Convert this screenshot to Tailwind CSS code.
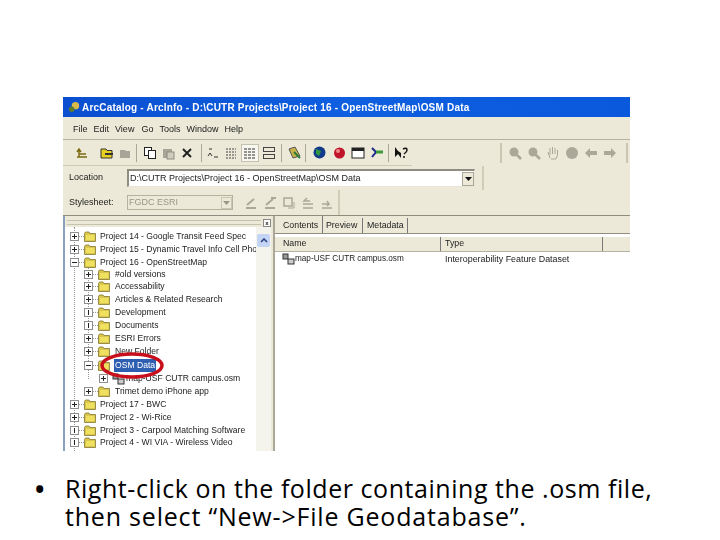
<!DOCTYPE html>
<html lang="en">
<head>
<meta charset="UTF-8">
<title>Slide</title>
<script src="https://cdn.jsdelivr.net/npm/@tailwindcss/browser@4"></script>
</head>
<body class="w-[720px] h-[540px] bg-white overflow-hidden font-['Open_Sans',sans-serif]">
<svg class="hidden">
  <symbol id="folder" viewBox="0 0 12 11">
    <path d="M0.5 2.5 L1.5 1 H5 L6 2.5 H11.5 V10.5 H0.5 Z" fill="#d8c64e" stroke="#85772f" stroke-width="0.8"/>
    <path d="M2 4 H10.5 V9 H2 Z" fill="#efe05f"/>
  </symbol>
  <symbol id="plus" viewBox="0 0 9 9">
    <rect x="0.5" y="0.5" width="8" height="8" fill="#fff" stroke="#8f8f8f"/>
    <path d="M2 4.5 H7 M4.5 2 V7" stroke="#222"/>
  </symbol>
  <symbol id="minus" viewBox="0 0 9 9">
    <rect x="0.5" y="0.5" width="8" height="8" fill="#fff" stroke="#8f8f8f"/>
    <path d="M2 4.5 H7" stroke="#222"/>
  </symbol>
  <symbol id="leaf" viewBox="0 0 9 9">
    <rect x="0.5" y="0.5" width="8" height="8" fill="#fff" stroke="#8f8f8f"/>
    <path d="M4.5 2 V7" stroke="#222"/>
  </symbol>
</svg>

<div class="h-[97px]"></div>
<div class="ml-[63px] w-[567px] h-[354px] bg-[#ece9d8] flex flex-col overflow-hidden text-[9px] text-[#222] font-['Liberation_Sans',sans-serif] relative blur-[0.45px]">
  <!-- title bar -->
  <div class="h-[20px] shrink-0 bg-gradient-to-r from-[#0a4fd0] via-[#0f5fe0] to-[#0a58dc] flex items-center pl-[5px] gap-[1px] text-white font-bold text-[10px] tracking-[0.2px]">
    <svg width="13" height="13" viewBox="0 0 14 14"><circle cx="8" cy="5" r="4" fill="#d8b94a"/><circle cx="4" cy="9" r="3" fill="#5a7a30"/></svg>
    <span>ArcCatalog - ArcInfo - D:\CUTR Projects\Project 16 - OpenStreetMap\OSM Data</span>
  </div>
  <!-- menu -->
  <div class="h-[23px] shrink-0 flex items-center pl-[10px] pt-[3px] gap-[6px] border-b border-[#b5b2a0] text-[9px]">
    <span>File</span><span>Edit</span><span>View</span><span class="ml-[1px]">Go</span><span>Tools</span><span>Window</span><span>Help</span>
  </div>
  <!-- main toolbar row -->
  <div class="h-[26px] shrink-0 flex items-center">
    <div class="w-[349px] h-full flex items-center pl-[11px] border-b border-[#cfccb8]">
      <svg class="ml-[1px]" width="14" height="14" viewBox="0 0 14 14"><path d="M2 11 H12 M4 11 V4 M2 6 L4 3 L6 6 M4 8 H11" stroke="#7a6a10" stroke-width="1.4" fill="none"/></svg>
      <svg class="ml-[11px]" width="14" height="14" viewBox="0 0 14 14"><path d="M1 3 H6 L7 4.500 H12 V12 H1 Z" fill="#e8d020" stroke="#333"/><path d="M5 8 H13" stroke="#333" stroke-width="2"/></svg>
      <svg class="ml-[4px]" width="14" height="14" viewBox="0 0 14 14"><path d="M2 4 H7 L8 5 H12 V12 H2 Z" fill="#a8a498"/></svg>
      <div class="ml-[4px] w-px h-[18px] bg-[#aca899]"></div>
      <svg class="ml-[6px]" width="14" height="14" viewBox="0 0 14 14"><rect x="1.500" y="1.500" width="7" height="8" fill="#fff" stroke="#222"/><rect x="5.500" y="4.500" width="7" height="8" fill="#fff" stroke="#222"/></svg>
      <svg class="ml-[4px]" width="14" height="14" viewBox="0 0 14 14"><rect x="2" y="3" width="9" height="9" fill="#a8a498"/><rect x="6" y="6" width="7" height="7" fill="#cfcbbd" stroke="#8f8c80"/></svg>
      <svg class="ml-[6px]" width="12" height="12" viewBox="0 0 12 12"><path d="M2 2 L10 10 M10 2 L2 10" stroke="#222" stroke-width="2"/></svg>
      <div class="ml-[8px] w-px h-[18px] bg-[#aca899]"></div>
      <svg class="ml-[4px]" width="14" height="14" viewBox="0 0 14 14"><path d="M3 3 H6 M2 10 L4 7 L6 10 M8 11 H12" stroke="#333" fill="none"/></svg>
      <svg class="ml-[4px]" width="14" height="14" viewBox="0 0 14 14"><path d="M2 3 H12 M2 6 H12 M2 9 H12 M2 12 H12" stroke="#444" stroke-dasharray="2 1"/></svg>
      <div class="ml-[3px] w-[18px] h-[18px] bg-[#f7f6ef] border border-[#c5c2b0] flex items-center justify-center">
        <svg width="14" height="12" viewBox="0 0 14 12"><path d="M1 2 H13 M1 5 H13 M1 8 H13 M1 11 H13" stroke="#333" stroke-dasharray="3 1"/></svg>
      </div>
      <svg class="ml-[3px]" width="14" height="14" viewBox="0 0 14 14"><rect x="1.500" y="1.500" width="11" height="4" fill="none" stroke="#444"/><rect x="1.500" y="8.500" width="11" height="4" fill="none" stroke="#444"/></svg>
      <div class="ml-[5px] w-px h-[18px] bg-[#aca899]"></div>
      <svg class="ml-[5px]" width="15" height="15" viewBox="0 0 15 15"><path d="M2 4 L8 2 L13 11 L6 13 Z" fill="#c9b24a" stroke="#555"/><path d="M7 7 L13 13" stroke="#2a7a3a" stroke-width="2"/></svg>
      <div class="ml-[3px] w-px h-[18px] bg-[#aca899]"></div>
      <svg class="ml-[6px]" width="15" height="15" viewBox="0 0 15 15"><circle cx="7.500" cy="7.500" r="6" fill="#123a8a"/><path d="M4 4 L9 6 L7 11 L4 9 Z" fill="#2f9a40"/></svg>
      <svg class="ml-[5px]" width="15" height="15" viewBox="0 0 15 15"><circle cx="7.500" cy="8" r="5.500" fill="#c0142a"/><circle cx="6" cy="6" r="2" fill="#ee8a8a"/></svg>
      <svg class="ml-[4px]" width="14" height="12" viewBox="0 0 14 12"><rect x="1" y="1" width="12" height="10" fill="#fff" stroke="#222"/><rect x="1" y="1" width="12" height="3" fill="#222"/></svg>
      <svg class="ml-[4px]" width="15" height="13" viewBox="0 0 15 13"><path d="M3 2 L7 6 L3 11" stroke="#1a2a8a" stroke-width="2" fill="none"/><path d="M7 6 H14" stroke="#3a9a3a" stroke-width="3"/></svg>
      <div class="ml-[4px] w-px h-[18px] bg-[#aca899]"></div>
      <svg class="ml-[4px]" width="16" height="14" viewBox="0 0 16 14"><path d="M2 1 V11 L5 8 L8 12 V7 L5 5 Z" fill="#111"/><path d="M10 3 Q14 1 14 4 Q14 6 11 8 M11 10 V12" stroke="#111" stroke-width="1.500" fill="none"/></svg>
    </div>
    <div class="ml-[88px] w-[128px] h-[20px] border-x-2 border-[#c9c6b4] flex items-center gap-[5px] pl-[6px]">
      <svg width="14" height="14" viewBox="0 0 14 14"><circle cx="6" cy="6" r="4.500" fill="#aca899"/><path d="M9 9 L13 13" stroke="#aca899" stroke-width="2.500"/></svg>
      <svg width="14" height="14" viewBox="0 0 14 14"><circle cx="6" cy="6" r="4.500" fill="#aca899"/><path d="M9 9 L13 13" stroke="#aca899" stroke-width="2.500"/></svg>
      <svg width="14" height="14" viewBox="0 0 14 14"><path d="M4 12 L2 6 M4 9 V2 M6.500 8 V1 M9 8 V2 M11.500 9 V4 V9 L10 13 H5" stroke="#aca899" fill="none"/></svg>
      <svg width="14" height="14" viewBox="0 0 14 14"><circle cx="7" cy="7" r="6" fill="#aca899"/></svg>
      <svg width="14" height="14" viewBox="0 0 14 14"><path d="M1 7 L6 2 V5 H13 V9 H6 V12 Z" fill="#aca899"/></svg>
      <svg width="14" height="14" viewBox="0 0 14 14"><path d="M13 7 L8 2 V5 H1 V9 H8 V12 Z" fill="#aca899"/></svg>
    </div>
  </div>
  <!-- location -->
  <div class="h-[24px] shrink-0 w-[421px] flex items-center pl-[6px] border-r-2 border-[#cfccb8]">
    <span class="w-[58px] text-[9px]">Location</span>
    <div class="w-[348px] h-[18px] bg-white border border-t-2 border-l-2 border-[#8f8c80] border-r-[#e8e5d8] border-b-[#e8e5d8] flex items-center justify-between pl-[1px]">
      <span class="whitespace-nowrap">D:\CUTR Projects\Project 16 - OpenStreetMap\OSM Data</span>
      <div class="w-[12px] h-[14px] bg-[#ece9d8] border border-[#aca899] flex items-center justify-center">
        <svg width="7" height="4" viewBox="0 0 7 4"><path d="M0 0 H7 L3.500 4 Z" fill="#111"/></svg>
      </div>
    </div>
  </div>
  <!-- stylesheet -->
  <div class="h-[25px] shrink-0 w-[277px] flex items-center pl-[6px] border-r-2 border-[#cfccb8]">
    <span class="w-[58px] text-[9px]">Stylesheet:</span>
    <div class="w-[106px] h-[15px] bg-[#ece9d8] border border-[#b5b2a0] flex items-center justify-between pl-[1px] text-[#9a9788]">
      <span>FGDC ESRI</span>
      <div class="w-[11px] h-[12px] border border-[#c9c6b4] flex items-center justify-center">
        <svg width="7" height="4" viewBox="0 0 7 4"><path d="M0 0 H7 L3.500 4 Z" fill="#9a9788"/></svg>
      </div>
    </div>
    <div class="flex items-center gap-[5px] ml-[11px]">
      <svg width="14" height="14" viewBox="0 0 14 14"><path d="M2 12 H12 M3 9 L10 3" stroke="#aca899" stroke-width="2" fill="none"/></svg>
      <svg width="14" height="14" viewBox="0 0 14 14"><path d="M2 12 H12 M3 9 L10 3 M8 2 H13" stroke="#aca899" stroke-width="2" fill="none"/></svg>
      <svg width="14" height="14" viewBox="0 0 14 14"><rect x="2" y="2" width="8" height="8" fill="none" stroke="#aca899" stroke-width="1.500"/><path d="M6 12 H12 V6" stroke="#aca899" fill="none"/></svg>
      <svg width="14" height="14" viewBox="0 0 14 14"><path d="M2 12 H12 M2 8 H12 M6 2 L3 5 H9" stroke="#aca899" stroke-width="1.500" fill="none"/></svg>
      <svg width="14" height="14" viewBox="0 0 14 14"><path d="M2 12 H12 M2 8 H9 L7 5 M9 8 L7 10" stroke="#aca899" stroke-width="1.500" fill="none"/></svg>
    </div>
  </div>
  <div class="h-px shrink-0 bg-[#8f8c80]"></div>
  <!-- panes -->
  <div class="flex-1 flex min-h-0">
    <div class="w-[2px] shrink-0 bg-[#8d9fc0]"></div>
    <!-- tree pane -->
    <div class="w-[206px] shrink-0 flex flex-col">
      <div class="h-[9px] shrink-0 flex items-center gap-[2px] mt-[2px] pl-[2px]">
        <div class="flex-1 h-[5px] border-y border-[#c5c2b0]"></div>
        <div class="w-[8px] h-[8px] bg-white border border-[#888] flex items-center justify-center text-[6px] leading-none font-bold">x</div>
      </div>
      <div class="flex-1 min-h-0 bg-white flex overflow-hidden relative">
        <!-- dotted guide lines of the tree -->
        <div class="absolute left-[9px] top-0 bottom-0 border-l border-dotted border-[#999]"></div>
        <div class="absolute left-[23px] top-[35px] h-[117px] border-l border-dotted border-[#999]"></div>
        <div class="flex-1 min-w-0 pt-[3px] whitespace-nowrap overflow-hidden text-[8.600px] leading-[13px] relative">
          <div class="h-[13px] flex items-center pl-[5px]"><svg class="w-[9px] h-[9px] shrink-0"><use href="#plus"/></svg><span class="w-[5px] shrink-0 border-t border-dotted border-[#999]"></span><svg class="w-[12px] h-[11px] shrink-0 mr-[4px]"><use href="#folder"/></svg><span>Project 14 - Google Transit Feed Spec</span></div>
          <div class="h-[13px] flex items-center pl-[5px]"><svg class="w-[9px] h-[9px] shrink-0"><use href="#plus"/></svg><span class="w-[5px] shrink-0 border-t border-dotted border-[#999]"></span><svg class="w-[12px] h-[11px] shrink-0 mr-[4px]"><use href="#folder"/></svg><span>Project 15 - Dynamic Travel Info Cell Phone</span></div>
          <div class="h-[12px] flex items-center pl-[5px]"><svg class="w-[9px] h-[9px] shrink-0"><use href="#minus"/></svg><span class="w-[5px] shrink-0 border-t border-dotted border-[#999]"></span><svg class="w-[12px] h-[11px] shrink-0 mr-[4px]"><use href="#folder"/></svg><span>Project 16 - OpenStreetMap</span></div>
          <div class="h-[12px] flex items-center pl-[19px]"><svg class="w-[9px] h-[9px] shrink-0"><use href="#plus"/></svg><span class="w-[5px] shrink-0 border-t border-dotted border-[#999]"></span><svg class="w-[12px] h-[11px] shrink-0 mr-[5px]"><use href="#folder"/></svg><span>#old versions</span></div>
          <div class="h-[13px] flex items-center pl-[19px]"><svg class="w-[9px] h-[9px] shrink-0"><use href="#plus"/></svg><span class="w-[5px] shrink-0 border-t border-dotted border-[#999]"></span><svg class="w-[12px] h-[11px] shrink-0 mr-[5px]"><use href="#folder"/></svg><span>Accessability</span></div>
          <div class="h-[13px] flex items-center pl-[19px]"><svg class="w-[9px] h-[9px] shrink-0"><use href="#plus"/></svg><span class="w-[5px] shrink-0 border-t border-dotted border-[#999]"></span><svg class="w-[12px] h-[11px] shrink-0 mr-[5px]"><use href="#folder"/></svg><span>Articles &amp; Related Research</span></div>
          <div class="h-[13px] flex items-center pl-[19px]"><svg class="w-[9px] h-[9px] shrink-0"><use href="#leaf"/></svg><span class="w-[5px] shrink-0 border-t border-dotted border-[#999]"></span><svg class="w-[12px] h-[11px] shrink-0 mr-[5px]"><use href="#folder"/></svg><span>Development</span></div>
          <div class="h-[13px] flex items-center pl-[19px]"><svg class="w-[9px] h-[9px] shrink-0"><use href="#leaf"/></svg><span class="w-[5px] shrink-0 border-t border-dotted border-[#999]"></span><svg class="w-[12px] h-[11px] shrink-0 mr-[5px]"><use href="#folder"/></svg><span>Documents</span></div>
          <div class="h-[13px] flex items-center pl-[19px]"><svg class="w-[9px] h-[9px] shrink-0"><use href="#plus"/></svg><span class="w-[5px] shrink-0 border-t border-dotted border-[#999]"></span><svg class="w-[12px] h-[11px] shrink-0 mr-[5px]"><use href="#folder"/></svg><span>ESRI Errors</span></div>
          <div class="h-[13px] flex items-center pl-[19px]"><svg class="w-[9px] h-[9px] shrink-0"><use href="#plus"/></svg><span class="w-[5px] shrink-0 border-t border-dotted border-[#999]"></span><svg class="w-[12px] h-[11px] shrink-0 mr-[5px]"><use href="#folder"/></svg><span>New Folder</span></div>
          <div class="h-[14px] flex items-center pl-[19px]"><svg class="w-[9px] h-[9px] shrink-0"><use href="#minus"/></svg><span class="w-[5px] shrink-0 border-t border-dotted border-[#999]"></span><svg class="w-[12px] h-[11px] shrink-0 mr-[4px]"><use href="#folder"/></svg><span class="bg-[#2f5fb0] text-white px-[1px]">OSM Data</span></div>
          <div class="h-[13px] flex items-center pl-[34px]"><svg class="w-[9px] h-[9px] shrink-0 mr-[4px]"><use href="#plus"/></svg><svg class="w-[13px] h-[12px] shrink-0 mr-[1px]" viewBox="0 0 13 12"><rect x="1" y="1" width="5" height="5" fill="#999" stroke="#333"/><rect x="6" y="6" width="6" height="5" fill="#ccc" stroke="#333"/></svg><span>map-USF CUTR campus.osm</span></div>
          <div class="h-[13px] flex items-center pl-[19px]"><svg class="w-[9px] h-[9px] shrink-0"><use href="#plus"/></svg><span class="w-[5px] shrink-0 border-t border-dotted border-[#999]"></span><svg class="w-[12px] h-[11px] shrink-0 mr-[5px]"><use href="#folder"/></svg><span>Trimet demo iPhone app</span></div>
          <div class="h-[13px] flex items-center pl-[5px]"><svg class="w-[9px] h-[9px] shrink-0"><use href="#plus"/></svg><span class="w-[5px] shrink-0 border-t border-dotted border-[#999]"></span><svg class="w-[12px] h-[11px] shrink-0 mr-[4px]"><use href="#folder"/></svg><span>Project 17 - BWC</span></div>
          <div class="h-[13px] flex items-center pl-[5px]"><svg class="w-[9px] h-[9px] shrink-0"><use href="#plus"/></svg><span class="w-[5px] shrink-0 border-t border-dotted border-[#999]"></span><svg class="w-[12px] h-[11px] shrink-0 mr-[4px]"><use href="#folder"/></svg><span>Project 2 - Wi-Rice</span></div>
          <div class="h-[12px] flex items-center pl-[5px]"><svg class="w-[9px] h-[9px] shrink-0"><use href="#leaf"/></svg><span class="w-[5px] shrink-0 border-t border-dotted border-[#999]"></span><svg class="w-[12px] h-[11px] shrink-0 mr-[4px]"><use href="#folder"/></svg><span>Project 3 - Carpool Matching Software</span></div>
          <div class="h-[13px] flex items-center pl-[5px]"><svg class="w-[9px] h-[9px] shrink-0"><use href="#leaf"/></svg><span class="w-[5px] shrink-0 border-t border-dotted border-[#999]"></span><svg class="w-[12px] h-[11px] shrink-0 mr-[4px]"><use href="#folder"/></svg><span>Project 4 - WI VIA - Wireless Video</span></div>
        </div>
        <!-- scrollbar -->
        <div class="w-[15px] shrink-0 bg-[#f4f3ec] flex flex-col items-center pt-[7px]">
          <div class="w-[13px] h-[13px] bg-[#c3d4f5] rounded-[2px] flex items-center justify-center">
            <svg width="8" height="5" viewBox="0 0 8 5"><path d="M1 4 L4 1 L7 4" stroke="#2a3f80" stroke-width="1.500" fill="none"/></svg>
          </div>
        </div>
      </div>
    </div>
    <!-- right pane -->
    <div class="flex-1 ml-[2px] flex flex-col min-w-0 border-l-2 border-[#aca899]">
      <div class="h-[17px] flex items-end shrink-0 text-[8.800px]">
        <div class="h-[17px] pl-[8px] pt-[3px] border-r border-[#777] w-[48px] shrink-0">Contents</div>
        <div class="h-[15px] pl-[3px] pt-[1px] border-r border-[#777] w-[40px] shrink-0 whitespace-nowrap">Preview</div>
        <div class="h-[15px] pl-[4px] pt-[1px] border-r border-[#777] w-[45px] shrink-0">Metadata</div>
      </div>
      <div class="flex-1 bg-white border-t border-[#8f8c80]">
        <div class="h-[15px] mt-[3px] bg-[#ece9d8] flex items-center border-b border-[#b5b2a0] text-[8.800px]">
          <div class="w-[166px] pl-[8px] border-r border-[#777] h-full">Name</div>
          <div class="w-[162px] pl-[4px] border-r border-[#777] h-full">Type</div>
        </div>
        <div class="h-[15px] flex items-center whitespace-nowrap">
          <div class="w-[166px] flex items-center pl-[7px] text-[8.200px]">
            <svg class="shrink-0" width="13" height="12" viewBox="0 0 13 12"><rect x="1" y="1" width="5" height="5" fill="#999" stroke="#333"/><rect x="6" y="6" width="6" height="5" fill="#ccc" stroke="#333"/></svg>
            <span>map-USF CUTR campus.osm</span>
          </div>
          <span class="pl-[4px] text-[8.900px]">Interoperability Feature Dataset</span>
        </div>
      </div>
    </div>
  </div>
  <!-- red circle drawn on the screenshot -->
  <svg class="absolute left-[37px] top-[255px]" width="64" height="27" viewBox="0 0 64 27"><ellipse cx="32" cy="13.500" rx="30" ry="11.500" fill="none" stroke="#c8101c" stroke-width="3.500"/></svg>
</div>
<!-- bullet text -->
<div class="flex mt-[23px] pl-[35px] text-[25px] leading-[28px] tracking-[0.55px] text-black">
  <span class="w-[30px] shrink-0 font-bold">•</span>
  <p class="whitespace-nowrap">Right-click on the folder containing the .osm file,<br><span class="tracking-[0.8px]">then select “New-&gt;File Geodatabase”.</span></p>
</div>
</body>
</html>
